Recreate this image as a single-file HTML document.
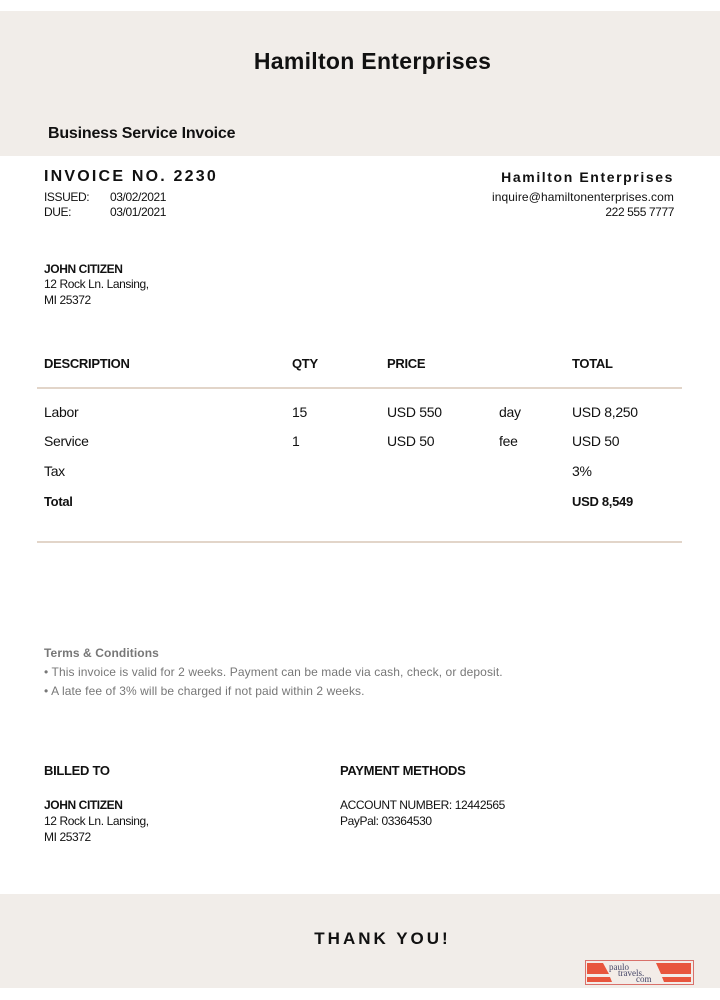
<!DOCTYPE html>
<html><head><style>
*{margin:0;padding:0;box-sizing:border-box}
body{width:720px;height:1000px;background:#fff;font-family:"Liberation Sans",sans-serif;color:#111;position:relative;overflow:hidden}
.a{position:absolute;white-space:nowrap}
.hdr{position:absolute;left:0;top:11px;width:720px;height:145px;background:#f1ede9}
.ftr{position:absolute;left:0;top:894px;width:720px;height:94px;background:#f1ede9}
.s{font-size:12px;letter-spacing:-0.4px}
.b{font-weight:bold}
.th{font-size:13px;font-weight:bold;letter-spacing:-0.3px}
.td{font-size:14px;letter-spacing:-0.3px}
.line{position:absolute;left:37px;width:645px;height:2px;background:#e2d5c9}
.g{color:#777;font-size:12px;letter-spacing:0.1px}
</style></head><body>
<div class="hdr"></div>
<div class="a b" style="left:0;width:745px;text-align:center;top:48px;font-size:23px;letter-spacing:0.3px">Hamilton Enterprises</div>
<div class="a b" style="left:48px;top:125px;font-size:16px;letter-spacing:-0.2px">Business Service Invoice</div>

<div class="a b" style="left:44px;top:168px;font-size:16px;letter-spacing:2.2px">INVOICE NO. 2230</div>
<div class="a s" style="left:44px;top:190px">ISSUED:</div><div class="a s" style="left:110px;top:190px">03/02/2021</div>
<div class="a s" style="left:44px;top:205px">DUE:</div><div class="a s" style="left:110px;top:205px">03/01/2021</div>
<div class="a b" style="right:46px;top:169px;font-size:14px;letter-spacing:1.6px">Hamilton Enterprises</div>
<div class="a s" style="right:46px;top:190px;letter-spacing:0.1px">inquire@hamiltonenterprises.com</div>
<div class="a s" style="right:46px;top:205px">222 555 7777</div>

<div class="a s b" style="left:44px;top:262px">JOHN CITIZEN</div>
<div class="a s" style="left:44px;top:277px">12 Rock Ln. Lansing,</div>
<div class="a s" style="left:44px;top:293px">MI 25372</div>

<div class="a th" style="left:44px;top:356px">DESCRIPTION</div>
<div class="a th" style="left:292px;top:356px">QTY</div>
<div class="a th" style="left:387px;top:356px">PRICE</div>
<div class="a th" style="left:572px;top:356px">TOTAL</div>
<div class="line" style="top:387px"></div>

<div class="a td" style="left:44px;top:404px">Labor</div><div class="a td" style="left:292px;top:404px">15</div><div class="a td" style="left:387px;top:404px">USD 550</div><div class="a td" style="left:499px;top:404px">day</div><div class="a td" style="left:572px;top:404px">USD 8,250</div>
<div class="a td" style="left:44px;top:433px">Service</div><div class="a td" style="left:292px;top:433px">1</div><div class="a td" style="left:387px;top:433px">USD 50</div><div class="a td" style="left:499px;top:433px">fee</div><div class="a td" style="left:572px;top:433px">USD 50</div>
<div class="a td" style="left:44px;top:463px">Tax</div><div class="a td" style="left:572px;top:463px">3%</div>
<div class="a td b" style="left:44px;top:494px;font-size:13px">Total</div><div class="a td b" style="left:572px;top:494px;font-size:13px">USD 8,549</div>
<div class="line" style="top:541px"></div>

<div class="a g b" style="left:44px;top:646px">Terms &amp; Conditions</div>
<div class="a g" style="left:44px;top:665px">• This invoice is valid for 2 weeks. Payment can be made via cash, check, or deposit.</div>
<div class="a g" style="left:44px;top:684px">• A late fee of 3% will be charged if not paid within 2 weeks.</div>

<div class="a th" style="left:44px;top:763px">BILLED TO</div>
<div class="a th" style="left:340px;top:763px">PAYMENT METHODS</div>
<div class="a s b" style="left:44px;top:798px">JOHN CITIZEN</div>
<div class="a s" style="left:44px;top:814px">12 Rock Ln. Lansing,</div>
<div class="a s" style="left:44px;top:830px">MI 25372</div>
<div class="a s" style="left:340px;top:798px">ACCOUNT NUMBER: 12442565</div>
<div class="a s" style="left:340px;top:814px">PayPal: 03364530</div>

<div class="ftr"></div>
<div class="a b" style="left:0;width:765px;text-align:center;top:929px;font-size:17px;letter-spacing:3px">THANK YOU!</div>
<svg class="a" style="left:585px;top:960px" width="109" height="25" viewBox="0 0 109 25">
<rect x="0.5" y="0.5" width="108" height="24" fill="#f3ece8" stroke="#d9706a"/>
<polygon points="2,3 18,3 24,14 2,14" fill="#e8553d"/>
<polygon points="2,17 25,17 27,22 2,22" fill="#e8553d"/>
<polygon points="71,3 106,3 106,14 76,14" fill="#e8553d"/>
<polygon points="77,17 106,17 106,22 79,22" fill="#e8553d"/>
<text x="24" y="10" font-family="Liberation Serif" font-size="9" fill="#446">paulo</text>
<text x="33" y="16" font-family="Liberation Serif" font-size="9" fill="#446">travels.</text>
<text x="51" y="22" font-family="Liberation Serif" font-size="9" fill="#446">com</text>
</svg>
</body></html>
